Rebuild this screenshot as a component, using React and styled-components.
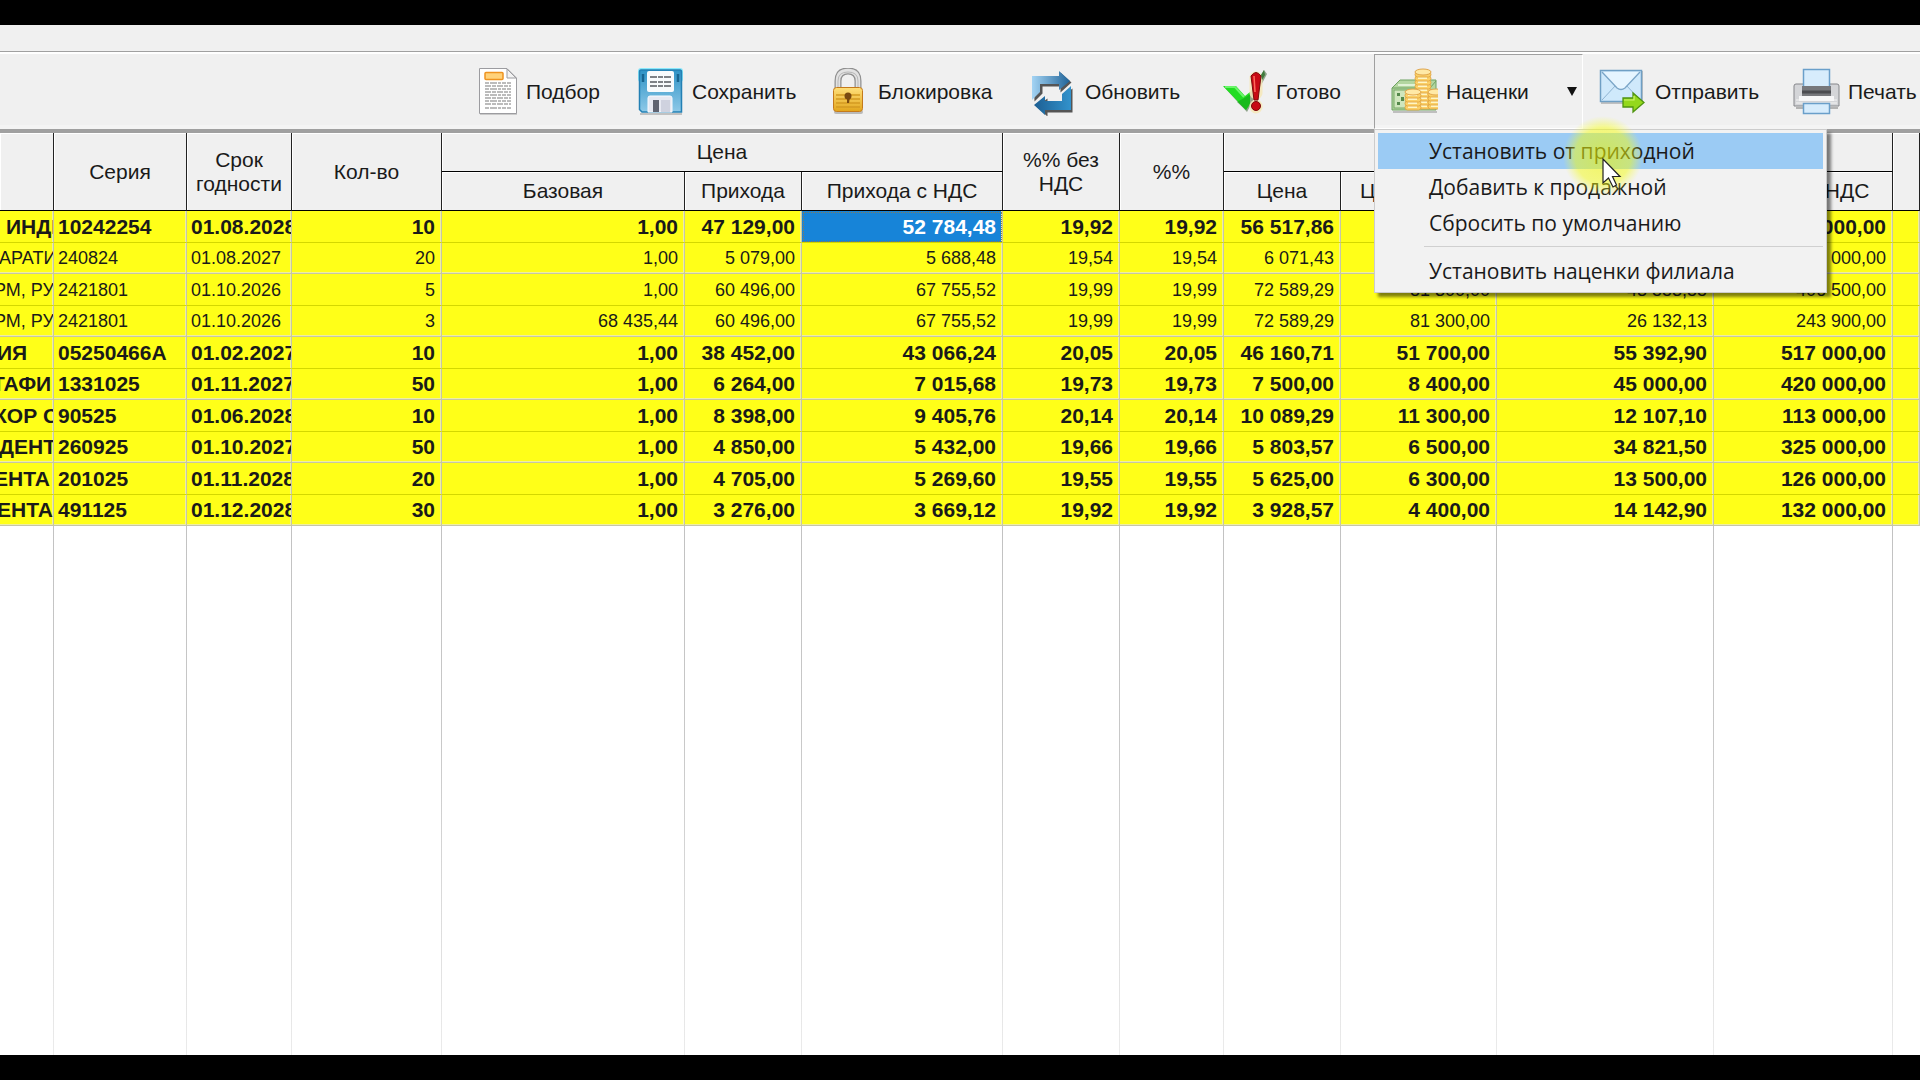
import styled, { createGlobalStyle, css } from "styled-components";

const GlobalStyle = createGlobalStyle`
  * {
    box-sizing: border-box;
  }

  body {
    margin: 0;
    background: #000000;
    font-family: "Liberation Sans", Arial, sans-serif;
    color: #1a1a1a;
  }

  button {
    font: inherit;
    color: inherit;
  }
`;

const Screen = styled.div`
  display: flex;
  flex-direction: column;
  height: 100vh;
  padding: 25px 0;
  overflow: hidden;
`;

const TitleStrip = styled.div`
  flex: none;
  height: 29px;
  background: #f0f0f0;
  border-bottom: 2px solid #ffffff;
  box-shadow: inset 0 -1px 0 #a0a0a0;
`;

const Toolbar = styled.div`
  flex: none;
  display: flex;
  height: 79px;
  padding-left: 454px;
  background: #f0f0f0;
  border-bottom: 4px solid #a0a0a0;
  box-shadow: inset 0 -4px 0 #f4f4f4;
`;

const ToolSlot = styled.div`
  position: relative;
  flex: none;
  width: ${({ $width }) => $width}px;
`;

const ToolButton = styled.button`
  display: flex;
  align-items: center;
  gap: 8px;
  width: 100%;
  height: 100%;
  padding: 0 0 0 15px;
  border: 1px solid transparent;
  background: transparent;
  font-size: 21px;
  white-space: nowrap;

  svg {
    flex: none;
  }

  ${({ $pressed }) =>
    $pressed &&
    css`
      border-color: #a0a0a0 #ffffff #ffffff #a0a0a0;
    `}
`;

const Caret = styled.span`
  margin: 0 5px 0 auto;
  border: 5px solid transparent;
  border-top: 9px solid #111111;
  border-bottom: 0;
`;

const Menu = styled.ul`
  position: absolute;
  top: 100%;
  left: 0;
  z-index: 2;
  width: 453px;
  margin: 0;
  padding: 3px;
  list-style: none;
  background: #f2f2f2;
  border: 1px solid #cccccc;
  box-shadow: 4px 4px 3px rgba(0, 0, 0, 0.5);
  font-family: "Open Sans", "Noto Sans", sans-serif;
`;

const MenuItem = styled.button`
  display: block;
  width: 100%;
  height: 36px;
  padding: 0 0 0 51px;
  border: 0;
  background: ${({ $active }) => ($active ? "#9bcbf4" : "transparent")};
  font-size: 21px;
  line-height: 36px;
  text-align: left;
  white-space: nowrap;
`;

const MenuSeparator = styled.li`
  height: 1px;
  margin: 5px 0 6px 46px;
  background: #d0d0d0;
`;

const Pointer = styled.svg`
  position: absolute;
  top: -14px;
  left: 188px;
  pointer-events: none;
`;

const GridPane = styled.div`
  flex: 1;
  min-height: 0;
  background: #ffffff;
`;

const Table = styled.table`
  width: 100%;
  height: 100%;
  table-layout: fixed;
  border-collapse: separate;
  border-spacing: 0;
`;

const HeadCell = styled.th`
  height: 39px;
  padding: 0 4px;
  background: #f0f0f0;
  border-right: 1px solid #222222;
  border-bottom: 1px solid #000000;
  box-shadow: inset 1px 1px 0 #ffffff;
  font-size: 21px;
  font-weight: 400;
  line-height: 24px;
  white-space: nowrap;
  overflow: hidden;
`;

const Row = styled.tr`
  height: ${({ $odd }) => ($odd ? 31 : 32)}px;
  font-size: ${({ $bold }) => ($bold ? 21 : 18)}px;
  font-weight: ${({ $bold }) => ($bold ? 700 : 400)};

  td {
    border-bottom: 1px solid ${({ $odd }) => ($odd ? "#c6c6a6" : "#d4d800")};
    box-shadow: inset -1px ${({ $odd }) => ($odd ? "-1px" : "0")} 0 #efefa0;
  }
`;

const Cell = styled.td`
  padding: ${({ $left }) => ($left ? "0 0 0 4px" : "0 6px 0 0")};
  background: #ffff18;
  border-right: 1px solid #c6c6a6;
  line-height: 28px;
  text-align: ${({ $left }) => ($left ? "left" : "right")};
  white-space: nowrap;
  overflow: hidden;

  ${({ $selected }) =>
    $selected &&
    css`
      background: #1784d8;
      color: #ffffff;
      outline: 1px dotted #8a7a50;
      outline-offset: -2px;
    `}
`;

const NameCell = styled(Cell)`
  padding: 0;
`;

const EmptyCell = styled.td`
  padding: 0;
  background: linear-gradient(#c2c2c2, #c8c8c8 40%, #ebebeb) right / 1px 100% no-repeat;
`;

const PickIcon = () => (
  <svg width="48" height="48" viewBox="0 0 48 48" aria-hidden="true">
    <path d="M10 2H38L47 11V47H10Z" fill="#9b9b9b" opacity=".45" />
    <path d="M9.500 .5H37L46.500 10V45.500H9.500Z" fill="#fff" stroke="#9c9ca0" />
    <path d="M37 1V10H46Z" fill="#f3f3f3" stroke="#9c9ca0" />
    <rect x="15" y="4.500" width="18" height="7" rx="1" fill="#ffd27a" stroke="#ee9320" strokeWidth="1.500" />
    <g stroke="#a6a6a6" strokeWidth="1.400">
      {[15, 18, 21, 24, 27, 30, 33, 36, 40].map((y, i) => (
        <path key={y} d={`M15 ${y}H41`} strokeDasharray={i % 2 ? "6 1 4 1" : "4 1 7 1 3 1"} />
      ))}
    </g>
  </svg>
);

const SaveIcon = () => (
  <svg width="48" height="48" viewBox="0 0 48 48" aria-hidden="true">
    <defs>
      <linearGradient id="disk" x1="0" y1="0" x2="0" y2="1">
        <stop offset="0" stopColor="#2f93c6" />
        <stop offset="1" stopColor="#8ec9e8" />
      </linearGradient>
    </defs>
    <rect x="2" y="0" width="45" height="14" rx="3" fill="#5fe4ff" opacity=".7" />
    <path d="M4 46H46" stroke="#888" strokeWidth="1.500" opacity=".6" />
    <path d="M5 2H44Q45.500 2 45.500 4V44H6L3.500 41.500V4Q3.500 2 5 2Z" fill="url(#disk)" stroke="#2380b4" strokeWidth="1.500" />
    <path d="M7 6V14M42 6V14" stroke="#176591" strokeWidth="2.500" />
    <rect x="11" y="3" width="27" height="21" rx="2" fill="#f8fbfd" />
    <path d="M14 9H35M14 14H35M14 18H35" stroke="#555b60" strokeWidth="1.600" strokeDasharray="7 1 5 1" />
    <path d="M14 28H34Q36 28 36 30V44H12V30Q12 28 14 28Z" fill="#e7e9f2" stroke="#f9fbff" />
    <rect x="17" y="32" width="6" height="12" fill="#5f6371" />
    <rect x="25" y="32" width="9" height="12" fill="#cfd2df" />
  </svg>
);

const LockIcon = () => (
  <svg width="48" height="48" viewBox="0 0 48 48" aria-hidden="true">
    <defs>
      <linearGradient id="brass" x1="0" y1="0" x2="0" y2="1">
        <stop offset="0" stopColor="#ffe07a" />
        <stop offset="1" stopColor="#e2a51c" />
      </linearGradient>
    </defs>
    <path d="M16 22V13Q16 3 26 3T36 13V22" fill="none" stroke="#8f8f8f" strokeWidth="7" />
    <path d="M16 22V13Q16 3 26 3T36 13V22" fill="none" stroke="#e2e2e2" strokeWidth="4.500" />
    <path d="M16 22V13Q16 4 26 4T36 13V22" fill="none" stroke="#b7b7b7" strokeWidth="1" />
    <rect x="12" y="42" width="29" height="4" rx="2" fill="#777" opacity=".45" />
    <rect x="11.500" y="19.500" width="29" height="24" rx="3" fill="url(#brass)" stroke="#c47a1c" />
    <path d="M14 27H38M14 31H38M14 35H38M14 39H38" stroke="#d39a22" strokeWidth="1.300" />
    <circle cx="26" cy="28" r="3.500" fill="#7a4a10" />
    <path d="M25 29H28L27 35H25Z" fill="#7a4a10" />
  </svg>
);

const RefreshIcon = () => (
  <svg width="48" height="48" viewBox="0 0 48 48" aria-hidden="true">
    <defs>
      <linearGradient id="arrowTop" x1="0" y1="0" x2="1" y2="0">
        <stop offset="0" stopColor="#a4d4f4" />
        <stop offset="1" stopColor="#1f6398" />
      </linearGradient>
      <linearGradient id="arrowBottom" x1="0" y1="0" x2="1" y2="0">
        <stop offset="0" stopColor="#1d5f93" />
        <stop offset="1" stopColor="#3292cc" />
      </linearGradient>
    </defs>
    <g fill="#222" opacity=".75" transform="translate(1.500 1.500)">
      <path d="M3 8H30V3L41 13L30 23V17H12V24L4 32Z" />
      <path d="M42 19V43H17V47L6 37L17 29V33H33V26Z" />
    </g>
    <path d="M3 8H30V3L41 13L30 22V16H11V24L3 32Z" fill="url(#arrowTop)" />
    <path d="M42 18V42H16V47L5 37L16 28V33H33V26Z" fill="url(#arrowBottom)" />
  </svg>
);

const ReadyIcon = () => (
  <svg width="48" height="48" viewBox="0 0 48 48" aria-hidden="true">
    <path d="M4 19H16L26 31L44 2L47 6L27 44Z" fill="#4c6f45" opacity=".6" />
    <path d="M3 18H16L25 28L30 24V36L26 42Z" fill="#22dd22" />
    <path d="M26 42L17 34L26 29L30 26V36Z" fill="#12a418" opacity=".6" />
    <path d="M5 19H15L24 29" fill="none" stroke="#6af56a" strokeWidth="2" />
    <path d="M36 10V25M36 38V39" stroke="#f6e8b8" strokeWidth="13" strokeLinecap="round" opacity=".85" />
    <path d="M41 7L44 2L45 7L42 12Z" fill="#3f7a3c" />
    <path d="M31 8Q36 1 41 8L38 32H34Z" fill="#c80a14" stroke="#7c0a0a" />
    <circle cx="36" cy="38" r="4.500" fill="#c80a14" stroke="#7c0a0a" />
    <path d="M34 8L35 24" stroke="#ff6a5a" strokeWidth="1.500" />
  </svg>
);

function CoinStack({ x, top, bottom }) {
  const coins = [];
  for (let y = bottom; y >= top; y -= 4) coins.push(y);
  return coins.map((y) => (
    <g key={y}>
      <rect x={x} y={y} width="16" height="5" rx="2.500" fill="#fbd067" stroke="#dd9f3c" strokeWidth=".8" />
      <path d={`M${x + 3} ${y + 2}H${x + 12}`} stroke="#fff6c4" strokeWidth="2" />
    </g>
  ));
}

const MarkupIcon = () => (
  <svg width="48" height="48" viewBox="0 0 48 48" aria-hidden="true">
    <path d="M3 44H47" stroke="#777" strokeWidth="2" opacity=".4" />
    <path d="M2 20L10 12H46V42H2Z" fill="#b3d6a0" stroke="#6fa262" />
    <path d="M2 20H40L46 13" fill="none" stroke="#6fa262" />
    <path d="M8 17H28" stroke="#e1f2d6" strokeWidth="2" />
    <rect x="4" y="22" width="38" height="18" fill="#cfe6bd" stroke="#79a869" />
    <path d="M7 25H10V28H7ZM11 29H14V33H11ZM7 34H10V37H7Z" fill="#55894c" />
    <CoinStack x={25} top={2} bottom={36} />
    <ellipse cx="33" cy="4" rx="8" ry="3" fill="#ffe9a6" stroke="#e0a54a" />
    <CoinStack x={15} top={23} bottom={37} />
    <ellipse cx="23" cy="24" rx="8" ry="3" fill="#ffe9a6" stroke="#e0a54a" />
    <CoinStack x={38} top={23} bottom={36} />
    <ellipse cx="46" cy="24" rx="8" ry="3" fill="#ffe9a6" stroke="#e0a54a" />
  </svg>
);

const SendIcon = () => (
  <svg width="48" height="48" viewBox="0 0 48 48" aria-hidden="true">
    <rect x="2" y="3" width="42" height="33" fill="#777" opacity=".4" />
    <rect x="1.500" y="2.500" width="41" height="31" fill="#cfe9fb" stroke="#6f9fc4" strokeWidth="1.500" />
    <path d="M3 32L17 17M41 32L27 17" stroke="#8fb4d2" />
    <path d="M3 4L18 20Q22 23 26 20L41 4" fill="#e6f5ff" stroke="#7ba6c8" strokeWidth="1.300" />
    <path d="M24 30H34V25L45 34.500L34 44V39H24Z" fill="#94d81c" stroke="#4f9410" strokeWidth="1.300" />
    <path d="M25 32H35V28" fill="none" stroke="#cdf56e" strokeWidth="1.200" />
  </svg>
);

const PrintIcon = () => (
  <svg width="48" height="48" viewBox="0 0 48 48" aria-hidden="true">
    <path d="M4 40H46" stroke="#777" strokeWidth="2" opacity=".5" />
    <path d="M4 16H45Q47 16 47 18V38H2V18Q2 16 4 16Z" fill="#d4d5d8" stroke="#85868a" />
    <path d="M4 32H45M4 35H45" stroke="#f4f4f4" />
    <rect x="11.500" y="1.500" width="26" height="18" fill="#d7ecfc" stroke="#6a9fca" strokeWidth="1.500" />
    <rect x="10" y="18" width="29" height="10" fill="#77787c" />
    <path d="M10 24H39" stroke="#4b4c50" strokeWidth="3" />
    <rect x="7" y="28" width="35" height="5" fill="#f6f6f7" />
    <rect x="11.500" y="35.500" width="26" height="10" fill="#d7ecfc" stroke="#6a9fca" strokeWidth="1.500" />
  </svg>
);

const tools = [
  { title: "Подбор", icon: PickIcon, width: 166 },
  { title: "Сохранить", icon: SaveIcon, width: 186 },
  { title: "Блокировка", icon: LockIcon, width: 207 },
  { title: "Обновить", icon: RefreshIcon, width: 191 },
  { title: "Готово", icon: ReadyIcon, width: 170 },
  { title: "Наценки", icon: MarkupIcon, width: 209, open: true },
  { title: "Отправить", icon: SendIcon, width: 193 },
  { title: "Печать", icon: PrintIcon, width: 160 },
];

const columns = [54, 133, 105, 150, 243, 117, 201, 117, 104, 117, 156, 217, 179];

// indent moves the goods name, which is scrolled off to the left
const rows = [
  { bold: true, name: "ИНДИЯ", indent: 6, values: ["10242254", "01.08.2028", "10", "1,00", "47 129,00", "52 784,48", "19,92", "19,92", "56 517,86", "63 300,00", "67 821,40", "633 000,00"] },
  { name: "АРАТИВ", indent: -1, values: ["240824", "01.08.2027", "20", "1,00", "5 079,00", "5 688,48", "19,54", "19,54", "6 071,43", "6 800,00", "14 571,40", "136 000,00"] },
  { name: "РМ, РУП", indent: -6, values: ["2421801", "01.10.2026", "5", "1,00", "60 496,00", "67 755,52", "19,99", "19,99", "72 589,29", "81 300,00", "43 553,55", "406 500,00"] },
  { name: "РМ, РУП", indent: -6, values: ["2421801", "01.10.2026", "3", "68 435,44", "60 496,00", "67 755,52", "19,99", "19,99", "72 589,29", "81 300,00", "26 132,13", "243 900,00"] },
  { bold: true, name: "ИЯ", indent: -3, values: ["05250466А", "01.02.2027", "10", "1,00", "38 452,00", "43 066,24", "20,05", "20,05", "46 160,71", "51 700,00", "55 392,90", "517 000,00"] },
  { bold: true, name: "ТАФИ", indent: -8, values: ["1331025", "01.11.2027", "50", "1,00", "6 264,00", "7 015,68", "19,73", "19,73", "7 500,00", "8 400,00", "45 000,00", "420 000,00"] },
  { bold: true, name: "КОР С", indent: -6, values: ["90525", "01.06.2028", "10", "1,00", "8 398,00", "9 405,76", "20,14", "20,14", "10 089,29", "11 300,00", "12 107,10", "113 000,00"] },
  { bold: true, name: "ДЕНТА", indent: -1, values: ["260925", "01.10.2027", "50", "1,00", "4 850,00", "5 432,00", "19,66", "19,66", "5 803,57", "6 500,00", "34 821,50", "325 000,00"] },
  { bold: true, name: "ЕНТА", indent: -6, values: ["201025", "01.11.2028", "20", "1,00", "4 705,00", "5 269,60", "19,55", "19,55", "5 625,00", "6 300,00", "13 500,00", "126 000,00"] },
  { bold: true, name: "ЕНТА", indent: -3, values: ["491125", "01.12.2028", "30", "1,00", "3 276,00", "3 669,12", "19,92", "19,92", "3 928,57", "4 400,00", "14 142,90", "132 000,00"] },
];

function MarkupMenu() {
  return (
    <Menu>
      <li>
        <MenuItem $active>Установить от приходной</MenuItem>
      </li>
      <li>
        <MenuItem>Добавить к продажной</MenuItem>
      </li>
      <li>
        <MenuItem>Сбросить по умолчанию</MenuItem>
      </li>
      <MenuSeparator />
      <li>
        <MenuItem>Установить наценки филиала</MenuItem>
      </li>
      <Pointer width="80" height="80" viewBox="0 0 80 80" aria-hidden="true">
        <defs>
          <radialGradient id="glow">
            <stop offset="0" stopColor="#f0f600" stopOpacity=".6" />
            <stop offset=".7" stopColor="#f4fc10" stopOpacity=".5" />
            <stop offset="1" stopColor="#f8ff40" stopOpacity="0" />
          </radialGradient>
        </defs>
        <circle cx="40" cy="40" r="40" fill="url(#glow)" />
        <path d="M40 43V67L45.500 62L50 71L53.500 69L49.500 60.500H57Z" fill="#fff" stroke="#222" strokeWidth="1.200" />
      </Pointer>
    </Menu>
  );
}

function PriceTable() {
  return (
    <Table>
      <colgroup>
        {columns.map((width, i) => (
          <col key={i} style={{ width }} />
        ))}
        <col />
      </colgroup>
      <thead>
        <tr>
          <HeadCell rowSpan={2} />
          <HeadCell rowSpan={2}>Серия</HeadCell>
          <HeadCell rowSpan={2}>
            Срок
            <br />
            годности
          </HeadCell>
          <HeadCell rowSpan={2}>Кол-во</HeadCell>
          <HeadCell colSpan={3}>Цена</HeadCell>
          <HeadCell rowSpan={2}>
            %% без
            <br />
            НДС
          </HeadCell>
          <HeadCell rowSpan={2}>%%</HeadCell>
          <HeadCell colSpan={4}>Продажа</HeadCell>
          <HeadCell rowSpan={2} />
        </tr>
        <tr>
          <HeadCell>Базовая</HeadCell>
          <HeadCell>Прихода</HeadCell>
          <HeadCell>Прихода с НДС</HeadCell>
          <HeadCell>Цена</HeadCell>
          <HeadCell>Цена с НДС</HeadCell>
          <HeadCell>Сумма НДС</HeadCell>
          <HeadCell>Сумма с НДС</HeadCell>
        </tr>
      </thead>
      <tbody>
        {rows.map((row, r) => (
          <Row key={r} $bold={row.bold} $odd={r % 2 === 1}>
            <NameCell $left style={{ textIndent: row.indent }}>
              {row.name}
            </NameCell>
            {row.values.map((value, c) => (
              <Cell key={c} $left={c < 2} $selected={r === 0 && c === 5}>
                {value}
              </Cell>
            ))}
            <Cell />
          </Row>
        ))}
        <tr>
          {columns.map((_, i) => (
            <EmptyCell key={i} />
          ))}
          <td />
        </tr>
      </tbody>
    </Table>
  );
}

export default function App() {
  return (
    <>
      <GlobalStyle />
      <Screen>
        <TitleStrip />
        <Toolbar>
          {tools.map((tool) => (
            <ToolSlot key={tool.title} $width={tool.width}>
              <ToolButton $pressed={tool.open}>
                <tool.icon />
                <span>{tool.title}</span>
                {tool.open && <Caret />}
              </ToolButton>
              {tool.open && <MarkupMenu />}
            </ToolSlot>
          ))}
        </Toolbar>
        <GridPane>
          <PriceTable />
        </GridPane>
      </Screen>
    </>
  );
}
